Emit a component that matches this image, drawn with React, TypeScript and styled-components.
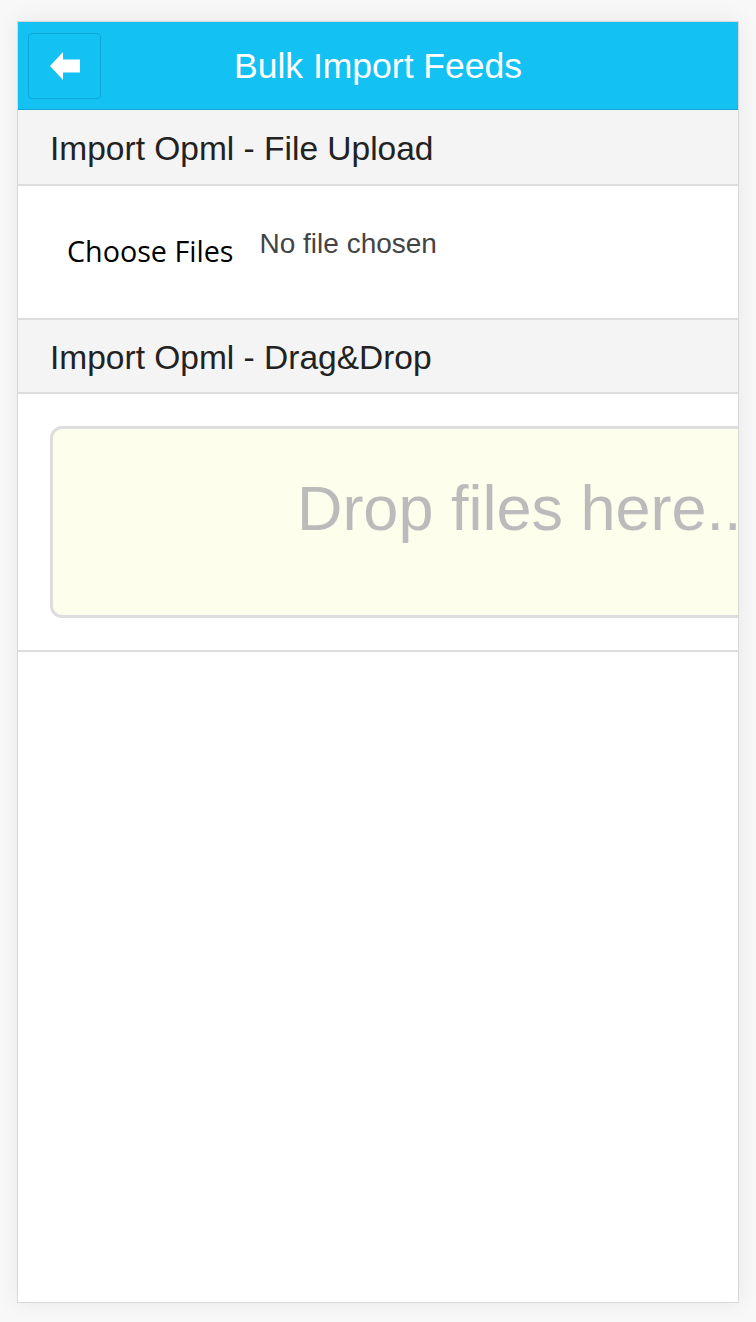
import React from "react";
import styled, { createGlobalStyle } from "styled-components";

const GlobalStyle = createGlobalStyle`
  html, body {
    margin: 0;
    padding: 0;
    background: #f8f8f8;
  }
  body {
    font-family: "Liberation Sans", Arial, sans-serif;
  }
`;

const Page = styled.div`
  box-sizing: border-box;
  width: 756px;
  height: 1322px;
  padding: 21px 0 0 17px;
  background: #f8f8f8;
`;

const Card = styled.div`
  box-sizing: border-box;
  width: 722px;
  height: 1282px;
  background: #ffffff;
  border: 1px solid #d8d8d8;
  box-shadow: 0 0 22px rgba(0, 0, 0, 0.07);
  overflow: hidden;
  display: flex;
  flex-direction: column;
`;

const Header = styled.header`
  box-sizing: border-box;
  height: 88px;
  padding: 10px;
  background: #13c1f2;
  border-bottom: 1px solid #0fa6d3;
  display: grid;
  grid-template-columns: 73px 1fr 73px;
  align-items: center;
`;

const BackButton = styled.button`
  box-sizing: border-box;
  width: 73px;
  height: 66px;
  margin: 0;
  padding: 0;
  background: transparent;
  border: 1px solid #0ea8d8;
  border-radius: 4px;
  display: flex;
  align-items: center;
  justify-content: center;
  cursor: pointer;
`;

const Title = styled.h1`
  margin: 0;
  text-align: center;
  color: #ffffff;
  font-family: "Liberation Sans", Arial, sans-serif;
  font-weight: normal;
  font-size: 35.5px;
  line-height: 40px;
`;

const SectionHeader = styled.h2<{ $h: number }>`
  box-sizing: border-box;
  margin: 0;
  height: ${(p) => p.$h}px;
  padding: 3px 0 0 32px;
  background: #f4f4f4;
  border-bottom: 2px solid #dddddd;
  color: #222222;
  font-family: "Liberation Sans", Arial, sans-serif;
  font-weight: normal;
  font-size: 33.5px;
  display: flex;
  align-items: center;
`;

const FileRow = styled.div`
  box-sizing: border-box;
  height: 134px;
  padding: 42px 0 0 49px;
  border-bottom: 2px solid #dddddd;
  display: flex;
  align-items: flex-start;
  gap: 26px;
`;

const ChooseButton = styled.span`
  margin-top: 4px;
  color: #000000;
  font-family: "Open Sans", "DejaVu Sans", sans-serif;
  font-size: 28.7px;
  line-height: 38px;
  white-space: nowrap;
`;

const FileStatus = styled.span`
  color: #444444;
  font-family: "Liberation Sans", Arial, sans-serif;
  font-size: 28px;
  line-height: 32px;
  white-space: nowrap;
`;

const DropSection = styled.div`
  box-sizing: border-box;
  height: 258px;
  padding: 32px 0 0 32px;
  border-bottom: 2px solid #dddddd;
`;

const DropZone = styled.div`
  box-sizing: border-box;
  width: 956px;
  height: 192px;
  padding-top: 43px;
  background: #fefeec;
  border: 3px solid #dddddd;
  border-radius: 12px;
  color: #bbbbbb;
  font-family: "Liberation Sans", Arial, sans-serif;
  font-size: 63px;
  line-height: 72px;
  text-align: center;
  white-space: nowrap;
`;

const BackArrow = () => (
  <svg width="30" height="28" viewBox="0 0 30 28" aria-hidden="true">
    <polygon points="0,14 13,0 13,7.5 30,7.5 30,20.5 13,20.5 13,28" fill="#ffffff" />
  </svg>
);

export default function App() {
  return (
    <>
      <GlobalStyle />
      <Page>
        <Card>
          <Header>
            <BackButton aria-label="Back">
              <BackArrow />
            </BackButton>
            <Title>Bulk Import Feeds</Title>
            <span />
          </Header>
          <SectionHeader $h={76}>Import Opml - File Upload</SectionHeader>
          <FileRow>
            <ChooseButton>Choose Files</ChooseButton>
            <FileStatus>No file chosen</FileStatus>
          </FileRow>
          <SectionHeader $h={74}>Import Opml - Drag&amp;Drop</SectionHeader>
          <DropSection>
            <DropZone>Drop files here...</DropZone>
          </DropSection>
        </Card>
      </Page>
    </>
  );
}
